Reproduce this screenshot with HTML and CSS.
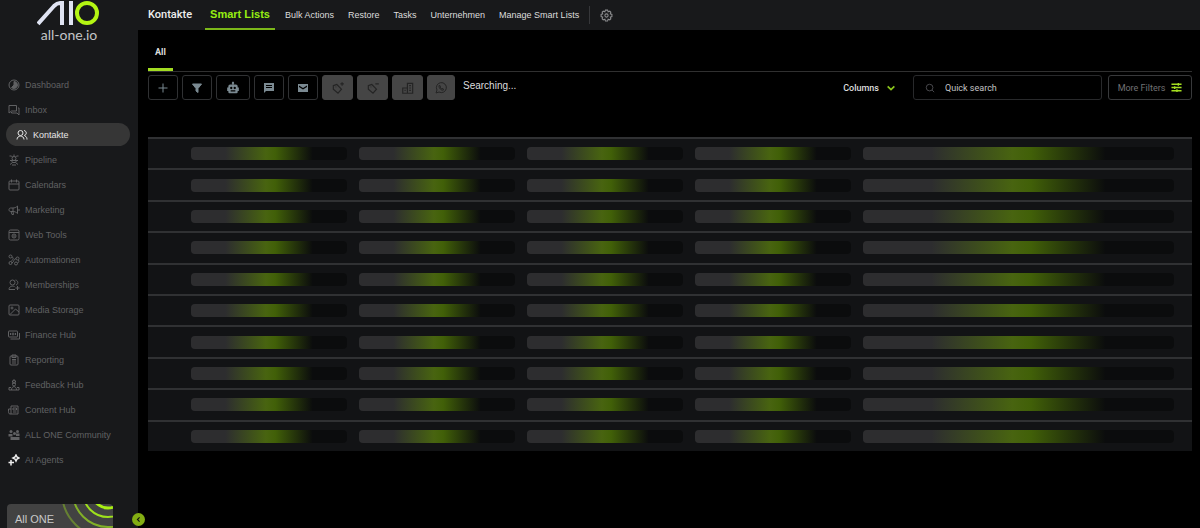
FILE: index.html
```html
<!DOCTYPE html>
<html lang="de">
<head>
  <meta charset="UTF-8">
  <meta name="viewport" content="width=device-width, initial-scale=1.0">
  <title>Kontakte</title>
  <link rel="stylesheet" href="styles.css">
</head>
<body>

  <aside class="sidebar">
    <div class="logo">
      <svg class="logo-mark" viewBox="0 0 64 26" aria-hidden="true">
        <path d="M1 24L17 6Q20 3 23 3H25V25M34 1V25" fill="none" stroke="#dfe3f2" stroke-width="4"/>
        <circle cx="50" cy="13" r="10" fill="none" stroke="#b4f513" stroke-width="4"/>
      </svg>
      <span class="logo-text">all-one.io</span>
    </div>

    <nav class="menu">
      <a href="#"><svg viewBox="0 0 24 24"><circle cx="12" cy="12" r="10"/><path d="M12 5a7 7 0 1 1-5 12l5-5z" fill="currentColor"/></svg>Dashboard</a>
      <a href="#"><svg viewBox="0 0 24 24"><path d="M2 3h15v11H7l-5 4zM20 8h2v14l-4-4H7v-2"/></svg>Inbox</a>
      <a href="#" class="active"><svg viewBox="0 0 24 24"><circle cx="9" cy="8" r="5"/><path d="M2 21c0-9 14-9 14 0M16 3c6 1 6 9 0 10M18 14c3 1 4 4 4 7"/></svg>Kontakte</a>
      <a href="#"><svg viewBox="0 0 24 24"><circle cx="12" cy="9" r="4"/><path d="M3 4h4l2 2M21 4h-4l-2 2M12 1v4M4 13h16M7 13l2 4h6l2-4M9 17l-5 4M15 17l5 4M8 22h8"/></svg>Pipeline</a>
      <a href="#"><svg viewBox="0 0 24 24"><rect x="2" y="4" width="20" height="18" rx="2"/><path d="M2 10h20M7 1v6M17 1v6"/></svg>Calendars</a>
      <a href="#"><svg viewBox="0 0 24 24"><path d="M19 4v15c-3-3-6-4-9-4H5c-4 0-4-7 0-7h5c3 0 6-1 9-4zM10 8v7M6 15l2 6h3l-1-6M22 10v4"/></svg>Marketing</a>
      <a href="#"><svg viewBox="0 0 24 24"><rect x="2" y="2" width="20" height="20" rx="3"/><path d="M2 7h20"/><circle cx="12" cy="14" r="4"/><circle cx="12" cy="14" r="1"/></svg>Web Tools</a>
      <a href="#"><svg viewBox="0 0 24 24"><circle cx="5" cy="5" r="3"/><circle cx="19" cy="9" r="3"/><circle cx="5" cy="18" r="3"/><circle cx="16" cy="19" r="3"/><path d="M8 6c5 2 1 6-2 9M21 12c2 4-1 6-2 6M16 9c-6 2-3 6-8 9"/></svg>Automationen</a>
      <a href="#"><svg viewBox="0 0 24 24"><circle cx="9" cy="7" r="5"/><path d="M15 2c6 1 6 9 1 10M13 15c-5-2-11 0-11 6h12M19 14v8M15 18h8"/></svg>Memberships</a>
      <a href="#"><svg viewBox="0 0 24 24"><rect x="2" y="2" width="20" height="20" rx="2"/><circle cx="8" cy="8" r="2"/><path d="M4 21L15 10l7 6"/></svg>Media Storage</a>
      <a href="#"><svg viewBox="0 0 24 24"><rect x="1" y="4" width="18" height="12" rx="1"/><circle cx="10" cy="10" r="2"/><path d="M5 8v4M15 8v4M23 8v12H5"/></svg>Finance Hub</a>
      <a href="#"><svg viewBox="0 0 24 24"><rect x="4" y="4" width="16" height="18" rx="2"/><path d="M8 2h8v5H8zM8 11h8M8 14h8M8 18h8"/></svg>Reporting</a>
      <a href="#"><svg viewBox="0 0 24 24"><path d="M12 1l1 3h3l-2 2 1 3-3-2-3 2 1-3-2-2h3z"/><circle cx="12" cy="11" r="3"/><path d="M7 22c0-9 10-9 10 0M2 22v-5h4M22 22v-5h-4M2 22h20"/></svg>Feedback Hub</a>
      <a href="#"><svg viewBox="0 0 24 24"><path d="M6 4h14v16H4c-3 0-3-3-3-10h5z"/><path d="M6 10v10M10 8h7v4h-7zM10 16h7"/></svg>Content Hub</a>
      <a href="#"><svg viewBox="0 0 24 24"><g fill="currentColor" stroke="none"><circle cx="6" cy="5" r="3"/><circle cx="19" cy="5" r="3"/><circle cx="13" cy="9" r="3"/><path d="M1 10h8v5H1zM16 9h7v5h-7zM5 16h18v6H5z"/></g></svg>ALL ONE Community</a>
      <a href="#" class="agents"><svg viewBox="0 0 24 24"><path d="M16 2l2 4 4 2-4 2-2 4-2-4-4-2 4-2zM6 12v11M1 17h11"/></svg>AI Agents</a>
    </nav>

    <button class="account">
      <span>All ONE</span>
      <svg viewBox="0 0 56 24" aria-hidden="true">
        <g fill="none" stroke="#9ee01c" stroke-width="2">
          <circle cx="51" cy="-12" r="16" stroke="#a8f014" stroke-width="3"/>
          <circle cx="51" cy="-12" r="25"/>
          <circle cx="51" cy="-12" r="35" opacity=".7"/>
          <circle cx="51" cy="-12" r="46" opacity=".4"/>
        </g>
      </svg>
    </button>
    <button class="collapse" aria-label="Collapse menu">
      <svg viewBox="0 0 12 12"><path d="M7 4L5 6l2 2"/></svg>
    </button>
  </aside>

  <main class="content">
    <header class="topbar">
      <h1>Kontakte</h1>
      <nav class="topnav">
        <a href="#" class="current">Smart Lists</a>
        <a href="#">Bulk Actions</a>
        <a href="#">Restore</a>
        <a href="#">Tasks</a>
        <a href="#">Unternehmen</a>
        <a href="#">Manage Smart Lists</a>
      </nav>
      <button class="settings" aria-label="Settings">
        <svg viewBox="0 0 24 24"><path d="M10 2h4l1 3 3-1 2 2-1 3 3 1v4l-3 1 1 3-2 2-3-1-1 3h-4l-1-3-3 1-2-2 1-3-3-1v-4l3-1-1-3 2-2 3 1z"/><circle cx="12" cy="12" r="3"/></svg>
      </button>
    </header>

    <div class="tabs">
      <a href="#" class="tab">All</a>
    </div>

    <div class="toolbar">
      <div class="actions">
        <button aria-label="Add contact"><svg viewBox="0 0 24 24"><path d="M12 3v18M3 12h18"/></svg></button>
        <button aria-label="Filter"><svg viewBox="0 0 24 24"><path d="M3 4h18l-7 9v8l-4-3v-5z" fill="currentColor"/></svg></button>
        <button class="wide" aria-label="Automation"><svg class="large" viewBox="0 0 24 24"><path fill="currentColor" fill-rule="evenodd" stroke="none" d="M11 6V5a2 2 0 1 1 2 0v1h4a3 3 0 0 1 3 3v2h2v6h-2v2a2 2 0 0 1-2 2H6a2 2 0 0 1-2-2v-2H2v-6h2V9a3 3 0 0 1 3-3zM9 10a2 2 0 1 0 0 4 2 2 0 0 0 0-4zm6 0a2 2 0 1 0 0 4 2 2 0 0 0 0-4zM8 16v2h8v-2z"/></svg></button>
        <button aria-label="Send SMS"><svg viewBox="0 0 24 24"><path fill="currentColor" fill-rule="evenodd" stroke="none" d="M2 2h20v16H6l-4 4zM6 6v2h12V6zm0 4v2h12v-2z"/></svg></button>
        <button aria-label="Send email"><svg viewBox="0 0 24 24"><path fill="currentColor" fill-rule="evenodd" stroke="none" d="M2 4h20v16H2zM4 7v3l8 5 8-5V7l-8 5z"/></svg></button>
        <button disabled aria-label="Add tag"><svg class="large" viewBox="0 0 24 24"><path d="M4 8l6-2 8 8-6 7-8-7zM8 10h1M19 2v6M16 5h6"/></svg></button>
        <button disabled aria-label="Remove tag"><svg class="large" viewBox="0 0 24 24"><path d="M4 8l6-2 8 8-6 7-8-7zM8 10h1M16 5h6"/></svg></button>
        <button disabled aria-label="Add to company"><svg class="large" viewBox="0 0 24 24"><path d="M11 4h9v17h-9zM3 12h8v9H3zM14 8h3M14 12h3M14 16h3M6 16h2"/></svg></button>
        <button disabled class="narrow" aria-label="WhatsApp"><svg viewBox="0 0 24 24"><path d="M2 22l2-6a10 10 0 1 1 4 4zM8 7c-1 5 5 11 9 9l-1-3-3 1-3-4 1-2z"/></svg></button>
      </div>
      <span class="status">Searching...</span>
      <button class="columns">Columns <svg viewBox="0 0 12 12"><path d="M2 4l4 4 4-4"/></svg></button>
      <label class="search">
        <svg viewBox="0 0 24 24"><circle cx="11" cy="11" r="8"/><path d="M17 17l5 5"/></svg>
        <input type="search" placeholder="Quick search" aria-label="Quick search">
      </label>
      <button class="more">More Filters
        <svg viewBox="0 0 24 24"><path d="M1 5h22M1 12h22M1 19h22M16 2v6M8 9v6M13 16v6"/></svg>
      </button>
    </div>

    <!-- loading rows -->
    <table class="contacts" aria-label="Kontakte" aria-busy="true">
      <colgroup><col class="check"><col class="field"><col class="field"><col class="field"><col class="field"><col></colgroup>
      <tbody id="rows"></tbody>
    </table>
  </main>

  <script>
    const rows = document.getElementById('rows');
    for (let i = 0; i < 10; i++) {
      const row = rows.insertRow();
      row.insertCell();
      for (let j = 0; j < 5; j++) {
        row.insertCell().innerHTML = '<div class="skeleton"></div>';
      }
    }
  </script>

</body>
</html>
```
FILE: styles.css
```css
* {
  box-sizing: border-box;
}

body {
  margin: 0;
  display: flex;
  height: 100vh;
  overflow: hidden;
  background: #000;
  color: #ddd;
  font-family: "Liberation Sans", Arial, sans-serif;
  font-size: 9px;
}

a {
  color: inherit;
  text-decoration: none;
}

button, input {
  font: inherit;
  color: inherit;
  background: none;
  border: none;
  padding: 0;
}

button {
  cursor: pointer;
}

svg {
  fill: none;
  stroke: currentColor;
  stroke-width: 2;
  flex: none;
}

/* sidebar */

.sidebar {
  position: relative;
  display: flex;
  flex-direction: column;
  width: 138px;
  flex: none;
  background: #18191b;
}

.logo {
  display: flex;
  flex-direction: column;
  align-items: center;
  height: 72px;
  flex: none;
}

.logo-mark {
  width: 64px;
  height: 26px;
}

.logo-text {
  font-family: Lato, sans-serif;
  font-size: 14px;
  line-height: 17px;
  color: #c4c5c8;
}

.menu a {
  display: flex;
  align-items: center;
  gap: 5px;
  height: 25px;
  padding-left: 8px;
  color: #606163;
}

.menu svg {
  width: 12px;
  height: 12px;
}

.menu .active {
  height: 23px;
  margin: 1px 8px 1px 6px;
  padding-left: 10px;
  border-radius: 12px;
  background: #363636;
  color: #e6e6e6;
}

.menu .agents svg {
  color: #eee;
  stroke-width: 3;
}

.account {
  display: flex;
  align-items: center;
  justify-content: space-between;
  height: 24px;
  margin: auto 25px 0 7px;
  padding-left: 8px;
  border-radius: 4px 4px 0 0;
  overflow: hidden;
  background: #424242;
  color: #c8c8c8;
  font-size: 11px;
}

.account span {
  padding-top: 5px;
}

.account svg {
  width: 56px;
  height: 24px;
}

.collapse {
  position: absolute;
  right: -7px;
  bottom: 2px;
  width: 13px;
  height: 13px;
  border-radius: 50%;
  background: #83ad13;
  color: #111;
}

.collapse svg {
  display: block;
  width: 13px;
  height: 13px;
  stroke-width: 1;
}

/* top navigation */

.content {
  flex: 1;
  min-width: 0;
}

.topbar {
  display: flex;
  align-items: center;
  height: 30px;
  padding-left: 10px;
  background: #18191b;
}

h1 {
  margin: 0 13px 2px 0;
  font-family: Roboto, sans-serif;
  font-size: 11px;
  font-weight: 500;
  color: #eee;
}

.topnav {
  display: flex;
  gap: 14px;
  height: 29px;
  line-height: 29px;
  padding-right: 10px;
}

.topnav a {
  white-space: nowrap;
}

.topnav .current {
  height: 29px;
  margin-right: -4px;
  padding: 0 5px;
  border-bottom: 2px solid #7cb81a;
  color: #96ee12;
  font-size: 11px;
  font-weight: bold;
  line-height: 27px;
}

.settings {
  height: 18px;
  padding-left: 10px;
  border-left: 1px solid #36373a;
  color: #8a8b8d;
}

.settings svg {
  display: block;
  width: 13px;
  height: 13px;
}

.tabs {
  display: flex;
  height: 42px;
  margin: 0 8px 0 10px;
  border-bottom: 1px solid #303030;
}

.tab {
  height: 41px;
  padding: 0 7px;
  border-bottom: 3px solid #a3dc22;
  font-family: Roboto, sans-serif;
  font-weight: bold;
  line-height: 44px;
}

/* toolbar */

.toolbar {
  display: flex;
  align-items: flex-start;
  margin: 3px 8px 0 10px;
}

.actions {
  display: flex;
  gap: 4px;
}

.actions button {
  display: flex;
  align-items: center;
  justify-content: center;
  width: 30px;
  height: 25px;
  border: 1px solid #303133;
  border-radius: 3px;
  color: #7b8a92;
}

.actions .wide {
  width: 34px;
}

.actions button:disabled {
  width: 31px;
  background: #454545;
  border-color: #454545;
  color: #242424;
}

.actions .narrow:disabled {
  width: 28px;
}

.actions svg {
  width: 12px;
  height: 12px;
}

.actions .large {
  width: 14px;
  height: 14px;
}

.status {
  margin-left: 8px;
  font-size: 10px;
  line-height: 22px;
}

.columns, .search, .more {
  font-family: Roboto, sans-serif;
}

.columns {
  display: flex;
  align-items: center;
  gap: 7px;
  height: 25px;
  margin: 0 17px 0 auto;
  font-weight: 500;
}

.columns svg {
  width: 10px;
  height: 10px;
  color: #8cc71c;
}

.search {
  display: flex;
  align-items: center;
  gap: 10px;
  width: 189px;
  height: 25px;
  padding: 0 11px;
  border: 1px solid #28292b;
  border-radius: 3px;
}

.search svg {
  width: 10px;
  height: 10px;
  color: #55565a;
}

.search input {
  flex: 1;
  min-width: 0;
  outline: none;
}

.search input::placeholder {
  color: #c4c4c4;
}

.more {
  display: flex;
  align-items: center;
  justify-content: center;
  gap: 6px;
  height: 25px;
  width: 84px;
  margin-left: 6px;
  border: 1px solid #38393b;
  border-radius: 3px;
  color: #707174;
}

.more svg {
  width: 11px;
  height: 11px;
  color: #a5df20;
  stroke-width: 3;
}

/* contacts table */

.contacts {
  width: calc(100% - 18px);
  height: 314px;
  margin: 37px 8px 0 10px;
  border-spacing: 0;
  table-layout: fixed;
  background: #121315;
}

.check {
  width: 37px;
}

.field {
  width: 168px;
}

.contacts td {
  padding: 0 6px;
  border-top: 2px solid #303133;
}

.contacts td:last-child {
  padding-right: 18px;
}

.skeleton {
  height: 13px;
  border-radius: 4px;
  background: linear-gradient(90deg, #2d2d2f 0%, #2d2d2f 22%, #486410 48%, #416008 54%, #0b0c0d 78%, #0b0c0d 100%);
}
```
